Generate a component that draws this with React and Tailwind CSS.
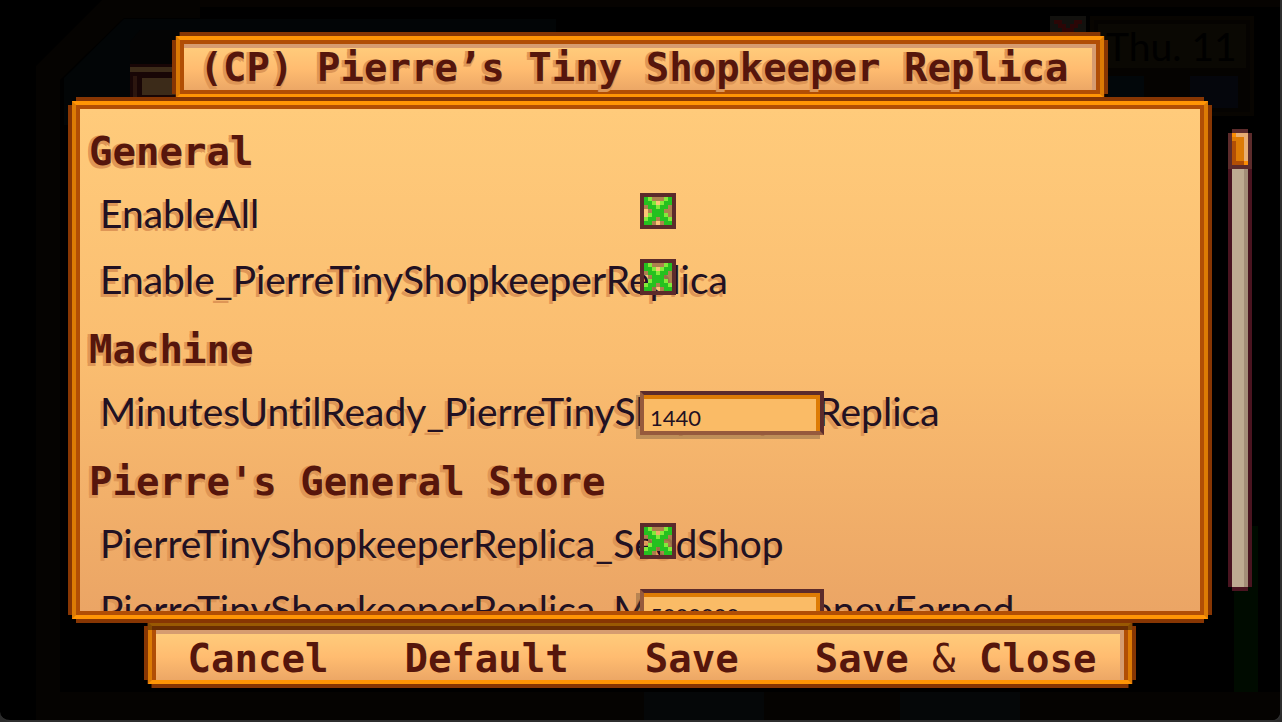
const options = [
  { type: 'heading', text: 'General' },
  { type: 'checkbox', name: 'EnableAll' },
  { type: 'checkbox', name: 'Enable_PierreTinyShopkeeperReplica' },
  { type: 'heading', text: 'Machine' },
  { type: 'text', name: 'MinutesUntilReady_PierreTinyShopkeeperReplica', value: '1440' },
  { type: 'heading', text: "Pierre's General Store" },
  { type: 'checkbox', name: 'PierreTinyShopkeeperReplica_SeedShop' },
  { type: 'text', name: 'PierreTinyShopkeeperReplica_MinimumMoneyEarned', value: '5000000' },
]

// one letter per pixel, a dot lets the panel show through
const palette = {
  b: '#5c2b2b',
  g: '#25c11f',
  l: '#84ea3a',
  t: '#a47a4ae6',
  o: '#dd7b05',
  f: '#fa8d05',
  n: '#b14e05',
  h: '#e8ae72',
  w: '#12110e',
  r: '#2b0606',
}

const checkPixels = [
  'bbbbbbbbb',
  'bgltttlgb',
  'bggl.lggb',
  'btgglggtb',
  'b.tgggttb',
  'b.lgggltb',
  'blggtgglb',
  'bggt.tggb',
  'bbbbbbbbb',
]

const thumbPixels = [
  '.bbbb.',
  'bfhhhb',
  'booohb',
  'bnoohb',
  'bnoohb',
  'bnoohb',
  'bnoohb',
  'bnoohb',
  'bnnnfb',
  'bbbbbb',
]

const closePixels = [
  'wwwwwwwww',
  'wrrwwwrrw',
  'wwrrwrrww',
  'wwwrrrwww',
  'wwwwrwwww',
  'wwwrrrwww',
  'wwrrwrrww',
  'wrrwwwrrw',
  'wwwwwwwww',
]

function PixelArt({ rows, className }) {
  return (
    <svg
      className={className}
      viewBox={`0 0 ${rows[0].length} ${rows.length}`}
      shapeRendering="crispEdges"
      aria-hidden="true"
    >
      {rows.map((row, y) =>
        row.split('').map((c, x) =>
          c === '.' ? null : (
            <rect key={`${x}-${y}`} x={x} y={y} width="1" height="1" fill={palette[c]} />
          )
        )
      )}
    </svg>
  )
}

function Frame({ className, children }) {
  return (
    <div
      className={`flex flex-col border-4 border-[#873603] [clip-path:polygon(0_8px,4px_8px,4px_4px,8px_4px,8px_0,calc(100%-8px)_0,calc(100%-8px)_4px,calc(100%-4px)_4px,calc(100%-4px)_8px,100%_8px,100%_calc(100%-8px),calc(100%-4px)_calc(100%-8px),calc(100%-4px)_calc(100%-4px),calc(100%-8px)_calc(100%-4px),calc(100%-8px)_100%,8px_100%,8px_calc(100%-4px),4px_calc(100%-4px),4px_calc(100%-8px),0_calc(100%-8px))] ${className}`}
    >
      <div className="flex min-h-0 flex-1 flex-col border-4 border-x-[#dc7b05] border-y-[#ff9505]">
        <div className="flex min-h-0 flex-1 flex-col border-4 border-[#b14e05]">{children}</div>
      </div>
    </div>
  )
}

function OptionRow({ option }) {
  if (option.type === 'heading') {
    return (
      <h2 className="h-[66px] pt-[2px] pl-[9px] font-['DejaVu_Sans_Mono',monospace] text-[39px] leading-[66px] font-bold whitespace-nowrap text-[#56160c] [text-shadow:-3px_0_#de9656,-3px_3px_#de9656,0_3px_#de9656]">
        {option.text}
      </h2>
    )
  }

  return (
    <div className="grid h-[66px] grid-cols-2 items-start">
      <label
        htmlFor={option.name}
        className="pl-5 text-[39px] leading-[60px] whitespace-nowrap text-[#221122] [font-variant-ligatures:none] [text-shadow:-3px_3px_#de9656]"
      >
        {option.name}
      </label>
      {option.type === 'checkbox' ? (
        <span className="relative mt-[10px] size-9">
          <input
            id={option.name}
            type="checkbox"
            defaultChecked
            className="peer block size-9 appearance-none border-4 border-[#5c2b2b]"
          />
          <PixelArt
            rows={checkPixels}
            className="pointer-events-none absolute inset-0 hidden size-9 peer-checked:block"
          />
        </span>
      ) : (
        <input
          id={option.name}
          type="text"
          defaultValue={option.value}
          className="relative mt-[10px] h-11 w-46 border-4 border-t-[#5c2b2b] border-r-[#5c2b2b] border-b-[#965a3c] border-l-[#965a3c] bg-[#fabb66] pt-2 pl-[6px] text-[22px] leading-6 text-[#221122] shadow-[inset_-4px_4px_0_#dd7b05,-4px_4px_0_rgba(90,70,50,0.35)] outline-none"
        />
      )}
    </div>
  )
}

function Scrollbar() {
  return (
    <div className="relative h-full w-6" role="scrollbar" aria-controls="options" aria-valuenow={0}>
      <div className="h-full border-4 border-[#4a1420] bg-[#beab91] shadow-[inset_-4px_0_0_#a38d77] [clip-path:polygon(4px_0,20px_0,20px_4px,24px_4px,24px_calc(100%-4px),20px_calc(100%-4px),20px_100%,4px_100%,4px_calc(100%-4px),0_calc(100%-4px),0_4px,4px_4px)]" />
      <PixelArt rows={thumbPixels} className="absolute top-0 left-0 h-10 w-6" />
    </div>
  )
}

// dimmed game world behind the menu
function Backdrop() {
  return (
    <div className="absolute inset-0 overflow-hidden">
      <svg className="absolute top-0 left-0 h-full w-[200px]" aria-hidden="true">
        <path d="M36 800V66L102 0H200V18H124L60 80V800Z" fill="#050301" />
        <path d="M64 125V78L124 19H200V125Z" fill="#020506" />
        <path d="M130 97V42l10-12h60v67z" fill="#040404" />
        <path d="M130 64h50v34h-50z" fill="#180606" />
        <path d="M130 67h50v5h-50zM142 78h38v17h-38z" fill="#3c2b19" />
        <path d="M133 76h4v22h-4z" fill="#2c160f" />
      </svg>
      <div className="absolute top-0 right-0 left-[200px] h-[7px] bg-[#060301]" />
      <div className="absolute top-[19px] left-[200px] h-4 w-[356px] bg-[#020506]" />
      <div className="absolute top-4 right-[26px] h-[100px] w-[164px] border-4 border-[#080501] bg-[#050301]" />
      <div className="absolute top-6 right-[34px] h-11 w-[148px] bg-[#0a0803] pl-2 text-[39px] leading-11 whitespace-nowrap text-black">
        Thu. 11
      </div>
      <div className="absolute top-[76px] right-[136px] h-8 w-9 bg-[#02070a]" />
      <div className="absolute top-[76px] right-[42px] h-8 w-12 bg-[#05060c]" />
      <PixelArt rows={closePixels} className="absolute top-4 right-[194px] size-9" />
      <div className="absolute right-[22px] bottom-[27px] h-[167px] w-6 bg-[#000b00]" />
      <div className="absolute right-0 bottom-0 left-[60px] h-7 bg-[#050301]" />
      <div className="absolute bottom-0 left-[644px] h-7 w-[120px] bg-[#050708]" />
      <div className="absolute bottom-0 left-[900px] h-7 w-[120px] bg-[#050708]" />
    </div>
  )
}

function App() {
  return (
    <div className="bg-[#2b2b2b] font-['Lato',sans-serif]">
      <div className="relative flex h-screen gap-4 overflow-hidden rounded-b-[10px] border-r-2 border-b-2 border-[#2f2f2f] bg-black pr-7 pl-[68px]">
        <Backdrop />
        <main className="relative flex min-w-0 flex-1 flex-col items-center pt-8 pb-8">
          <Frame className="-mb-[5px] h-[70px] shrink-0">
            <h1 className="flex-1 border-t-4 border-r-4 border-[#d69c70] bg-linear-to-b from-[#ffcb7b] via-[#ffbc70] to-[#eca766] pr-6 pl-4 font-['DejaVu_Sans_Mono',monospace] text-[39px] leading-10 font-bold whitespace-nowrap text-[#56160c] [text-shadow:-3px_0_#de9656,-3px_3px_#de9656,0_3px_#de9656]">
              (CP) Pierre’s Tiny Shopkeeper Replica
            </h1>
          </Frame>

          <Frame className="relative z-10 min-h-0 w-full flex-1">
            <div
              id="options"
              className="min-h-0 flex-1 overflow-hidden bg-linear-to-b from-[#ffcb7b] via-[#fabd70] to-[#eba565] pt-2"
            >
              {options.map((option) => (
                <OptionRow key={option.name || option.text} option={option} />
              ))}
            </div>
          </Frame>

          <div className="relative -mt-[5px] shrink-0">
            <Frame className="h-[70px]">
              <div className="flex flex-1 gap-[76px] border-t-4 border-r-4 border-[#d69c70] bg-linear-to-b from-[#ffcb7b] via-[#ffbc70] to-[#eca766] pt-1 pr-6 pl-8 font-['DejaVu_Sans_Mono',monospace] text-[39px] leading-[42px] font-bold whitespace-nowrap text-[#56160c] [text-shadow:-3px_0_#de9656,-3px_3px_#de9656,0_3px_#de9656]">
                <button type="button">Cancel</button>
                <button type="button">Default</button>
                <button type="button">Save</button>
                <button type="button">
                  Save <span className="font-normal">&amp;</span> Close
                </button>
              </div>
            </Frame>
            <div className="absolute inset-x-1 top-0 h-3 bg-black/40" />
          </div>
        </main>
        <div className="relative pt-[129px] pb-[129px]">
          <Scrollbar />
        </div>
      </div>
    </div>
  )
}

export default App
